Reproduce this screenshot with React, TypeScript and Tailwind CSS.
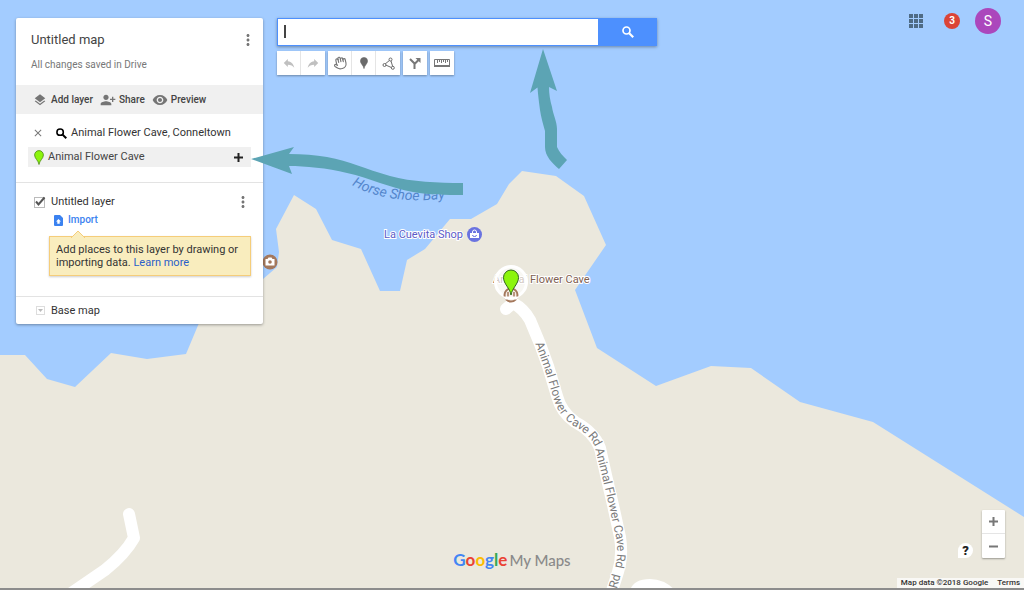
import React, { useState } from "react";
import { Hand } from "lucide-react";
import {
  MdClose,
  MdLayers,
  MdMoreVert,
  MdPersonAddAlt1,
  MdRemoveRedEye,
  MdReply,
} from "react-icons/md";

const ROAD =
  "M506 309 L513 303 Q524 309 530 320 L540 344 L548 366 L557 396 Q561 412 575 422 Q594 432 600 448 L606 475 L613 505 L620 537 Q623 556 618 572 L611 594";

function MapCanvas() {
  return (
    <svg
      className="absolute inset-0 h-full w-full"
      viewBox="0 0 1024 590"
      preserveAspectRatio="xMidYMid slice"
      fontFamily="Roboto, sans-serif"
      role="img"
      aria-label="Map"
    >
      <rect width="1024" height="590" fill="#a3ccff" />
      <path
        fill="#ebe8dd"
        d="M0 355 L25 355 L47 379 L75 387 L111 353 L147 359 L186 354 L199 323 L263 279 L277 267 L279 252 L276 229 L294 195 L316 209 L332 240 L361 249 L380 291 L400 291 L407 260 L425 249 L450 219 L471 219 L497 204 L509 184 L522 171 L556 176 L584 196 L606 245 L575 290 L597 348 L656 386 L711 366 L751 368 L800 402 L873 422 L1024 517 V590 H0 Z"
      />
      <g fill="none" stroke="#fff" strokeWidth="12" strokeLinecap="round" strokeLinejoin="round">
        <path d="M129 514 L134 538 Q125 554 105 570 L70 594" />
        <path d={ROAD} />
      </g>
      <path fill="#fff" d="M630 590 Q634 579 650 579 Q664 579 675 590 Z" />

      <defs>
        <path id="road-a" d="M539 342 L548 366 L557 396 Q561 412 575 422 Q594 432 600 448 L604 460" />
        <path id="road-b" d="M599 448 L606 475 L613 505 L620 537 Q623 556 618 572 L611 594" />
        <path id="road-c" d="M613 588 L618 570" />
        <path id="bay" d="M352 185 Q388 206 450 198" />
      </defs>
      <g fill="#7b7b7b" stroke="#fff" strokeWidth="2" paintOrder="stroke" fontSize="12">
        <text dy="4">
          <textPath href="#road-a">Animal Flower Cave Rd</textPath>
        </text>
        <text dy="4">
          <textPath href="#road-b">Animal Flower Cave Rd</textPath>
        </text>
        <text dy="4">
          <textPath href="#road-c">Rd</textPath>
        </text>
      </g>
      <text fill="#5486cc" fontSize="14" fontStyle="italic">
        <textPath href="#bay">Horse Shoe Bay</textPath>
      </text>

      <text x="384" y="238" fontSize="11" fill="#5b5bc8" stroke="#fff" strokeWidth="2" paintOrder="stroke">
        La Cuevita Shop
      </text>
      <circle cx="474.500" cy="234.500" r="7.500" fill="#6a73e0" />
      <path fill="#fff" d="M470 233 h9 v5 h-9 Z" />
      <path fill="none" stroke="#fff" d="M472.500 233 v-1 a2 2 0 0 1 4 0 v1" />
      <path fill="none" stroke="#6a73e0" d="M472.500 235 a2 1.500 0 0 0 4 0" />

      <circle cx="270" cy="262" r="7.500" fill="#a4785c" />
      <path fill="#fff" d="M265.500 259 h2 l1 -1.500 h3 l1 1.500 h2 v6.500 h-9 Z" />
      <circle cx="270" cy="262" r="1.800" fill="#a4785c" />

      <text x="493" y="283" fontSize="11" fill="#806050" stroke="#fff" strokeWidth="2" paintOrder="stroke">
        Animal Flower Cave
      </text>
      <circle cx="511" cy="282" r="15.500" fill="#fff" fillOpacity="0.650" stroke="#fff" strokeWidth="3" />
      <circle cx="511" cy="295" r="6.500" fill="#f4ece6" stroke="#a4785c" strokeWidth="2" />
      <path fill="none" stroke="#a4785c" strokeWidth="1.500" d="M508 292 V297 M514 292 V297" />
      <path fill="#fff" d="M503 296.500 h16 l-2 3 h-12 Z" />
      <path
        fill="#8cf50c"
        stroke="#33691e"
        d="M511 295 C510 288 503.500 284 503.500 277.500 a7.500 7.500 0 0 1 15 0 C518.500 284 512 288 511 295 Z"
      />
    </svg>
  );
}

function Arrows() {
  return (
    <svg
      className="pointer-events-none absolute inset-0 h-full w-full"
      viewBox="0 0 1024 590"
      preserveAspectRatio="xMidYMid slice"
      aria-hidden="true"
      fill="#5ca4b4"
    >
      <path d="M251 159 L294 147 L289 154 C303 154 315 155 327 157 C350 161 365 169 390 176 C412 182 438 183 463 183 V195 C445 195 430 195 413 192 C390 188 370 178 347 173 C327 168 305 166 289 166 L292 174 Z" />
      <path d="M543 49 L557 91 L549 87 C549 94 550 100 552 107 C553 114 557 122 557 129 V147 C559 152 563 156 567 160 L559 169 C552 163 545 156 545 147 V131 C543 124 541 117 540 110 C539 102 538 95 537.500 87.500 L530 93 Z" />
    </svg>
  );
}

function Pin({ className, fill, stroke }: { className: string; fill: string; stroke: string }) {
  return (
    <svg className={className} viewBox="0 0 10 15" aria-hidden="true">
      <path
        d="M5 14.500 C4.500 10.500 0.600 8.500 0.600 5 a4.400 4.400 0 0 1 8.800 0 C9.400 8.500 5.500 10.500 5 14.500 Z"
        fill={fill}
        stroke={stroke}
        strokeWidth="0.800"
      />
    </svg>
  );
}

function SearchIcon({ className }: { className: string }) {
  return (
    <svg className={className} viewBox="0 0 12 12" fill="none" stroke="currentColor" aria-hidden="true">
      <circle cx="4.500" cy="4.500" r="3.500" strokeWidth="1.700" />
      <path d="M7.200 7.200 L11.200 11.200" strokeWidth="2.200" />
    </svg>
  );
}

function PlusIcon() {
  return (
    <svg className="h-[9px] w-[9px]" viewBox="0 0 9 9" fill="currentColor" aria-hidden="true">
      <path d="M3.500 0 H5.500 V3.500 H9 V5.500 H5.500 V9 H3.500 V5.500 H0 V3.500 H3.500 Z" />
    </svg>
  );
}

function MinusIcon() {
  return (
    <svg className="h-[9px] w-[9px]" viewBox="0 0 9 9" fill="currentColor" aria-hidden="true">
      <path d="M0 3.500 H9 V5.500 H0 Z" />
    </svg>
  );
}

function Panel() {
  const [visible, setVisible] = useState(true);
  return (
    <aside className="w-[247px] shrink-0 rounded-[2px] bg-white text-[11px] leading-4 text-[#333] shadow-[0_1px_3px_rgba(0,0,0,0.35)]">
      <header className="flex justify-between px-[15px] pt-3 pb-3">
        <div>
          <h1 className="text-[13px] leading-5 text-[#444]">Untitled map</h1>
          <p className="mt-[7px] text-[10px] leading-4 text-[#777]">All changes saved in Drive</p>
        </div>
        <button aria-label="Map options" className="-mr-[9px] h-5 text-[#757575]">
          <MdMoreVert size={18} />
        </button>
      </header>

      <div className="flex h-[29px] items-center gap-[7px] bg-[#f0f0f0] pl-[17px] text-[10px] font-medium text-[#444]">
        <button className="flex items-center gap-1">
          <MdLayers size={14} className="text-[#757575]" />
          Add layer
        </button>
        <button className="flex items-center gap-[3px]">
          <MdPersonAddAlt1 size={16} className="text-[#757575]" />
          Share
        </button>
        <button className="flex items-center gap-[3px]">
          <MdRemoveRedEye size={16} className="text-[#757575]" />
          Preview
        </button>
      </div>

      <section className="h-[69px] border-b border-[#e3e3e3] px-3 pt-[11px]">
        <div className="flex h-4 items-center pl-1">
          <button aria-label="Clear search" className="text-[#777]">
            <MdClose size={12} />
          </button>
          <SearchIcon className="mr-1 ml-3 h-[11px] w-[11px] text-black" />
          <h2 className="whitespace-nowrap">Animal Flower Cave, Conneltown</h2>
        </div>
        <div className="mt-[6px] flex h-5 items-center bg-[#f0f0f0] pr-2 pl-[6px]">
          <Pin className="mr-1 h-[15px] w-[10px]" fill="#8cf50c" stroke="#4b8b12" />
          <span className="grow text-[#444]">Animal Flower Cave</span>
          <button aria-label="Add to map" className="text-[#222]">
            <PlusIcon />
          </button>
        </div>
      </section>

      <section className="h-[114px] border-b border-[#e3e3e3] pt-[9px] pr-3 pl-[18px]">
        <div className="flex h-5 items-center">
          <label className="flex grow items-center gap-[6px]">
            <span className="relative flex h-[11px] w-[11px]">
              <input
                type="checkbox"
                checked={visible}
                onChange={() => setVisible(!visible)}
                className="h-[11px] w-[11px] appearance-none border border-[#bbb] bg-white"
              />
              {visible && (
                <svg className="pointer-events-none absolute inset-0 overflow-visible" viewBox="0 0 11 11" aria-hidden="true">
                  <path d="M2 4.500 L4.500 7.500 L10.500 0.500" fill="none" stroke="#555" strokeWidth="2" />
                </svg>
              )}
            </span>
            Untitled layer
          </label>
          <button aria-label="Layer options" className="-mr-[1px] text-[#757575]">
            <MdMoreVert size={18} />
          </button>
        </div>
        <button className="ml-5 flex h-4 items-center gap-[5px] text-[10px] font-medium text-[#3b82f0]">
          <svg className="h-[11px] w-[9px]" viewBox="0 0 9 11" aria-hidden="true">
            <path d="M0 1 Q0 0 1 0 H6 L9 3 V10 Q9 11 8 11 H1 Q0 11 0 10 Z" fill="#3b82f0" />
            <path d="M4.500 4 L7 6.500 H5.700 V8.700 H3.300 V6.500 H2 Z" fill="#fff" />
          </svg>
          Import
        </button>
        <div className="relative mt-2 ml-[15px] border border-[#f5cd7a] bg-[#f9edbe] p-[6px] text-[11px] leading-[13px] shadow-[0_1px_2px_rgba(0,0,0,0.2)]">
          <svg className="absolute -top-[7px] left-5 h-2 w-4" viewBox="0 0 16 8" aria-hidden="true">
            <path d="M1 8 L8 1 L15 8" fill="#f9edbe" stroke="#f5cd7a" />
          </svg>
          Add places to this layer by drawing or importing data.{" "}
          <a href="#learn" className="text-[#2a5fc9]">
            Learn more
          </a>
        </div>
      </section>

      <button className="flex h-[27px] w-full items-center gap-[6px] pl-5 text-left">
        <span className="flex h-[9px] w-[9px] items-center justify-center border border-[#ddd]">
          <svg className="h-[3px] w-[5px]" viewBox="0 0 5 3" aria-hidden="true">
            <path d="M0 0 H5 L2.500 3 Z" fill="#bbb" />
          </svg>
        </span>
        Base map
      </button>
    </aside>
  );
}

function Tool({ label, children }: { label: string; children: React.ReactNode }) {
  return (
    <button aria-label={label} className="flex h-6 w-6 items-center justify-center">
      {children}
    </button>
  );
}

function ToolGroup({ children }: { children: React.ReactNode }) {
  return (
    <div className="flex divide-x divide-[#e5e5e5] bg-white text-[#777] shadow-[0_1px_2px_rgba(0,0,0,0.35)]">
      {children}
    </div>
  );
}

function SearchArea() {
  const [query, setQuery] = useState("");
  return (
    <div className="w-[380px]">
      <form className="flex h-7 shadow-[0_1px_3px_rgba(0,0,0,0.35)]" onSubmit={(e) => e.preventDefault()}>
        <div className="relative grow">
          <input
            aria-label="Search"
            value={query}
            onChange={(e) => setQuery(e.target.value)}
            className="h-full w-full border border-[#4d90fe] bg-white px-2 text-[13px] outline-none"
          />
          {query === "" && (
            <span className="pointer-events-none absolute top-[7px] left-[7px] h-[13px] w-[2px] bg-[#444]" />
          )}
        </div>
        <button aria-label="Search maps" className="flex w-[58px] items-center justify-center bg-[#4d90fe] text-white">
          <SearchIcon className="h-3 w-3" />
        </button>
      </form>
      <div className="mt-[5px] flex gap-[3px]">
        <ToolGroup>
          <Tool label="Undo">
            <MdReply size={14} className="text-[#c0c0c0]" />
          </Tool>
          <Tool label="Redo">
            <MdReply size={14} className="-scale-x-100 text-[#c0c0c0]" />
          </Tool>
        </ToolGroup>
        <ToolGroup>
          <Tool label="Select items">
            <Hand size={14} strokeWidth={2} className="-rotate-12" />
          </Tool>
          <Tool label="Add marker">
            <Pin className="h-3 w-2" fill="#6b6b6b" stroke="#6b6b6b" />
          </Tool>
          <Tool label="Draw a line">
            <svg className="h-[13px] w-[13px]" viewBox="0 0 13 13" fill="none" stroke="#6b6b6b" aria-hidden="true">
              <path d="M8 3 L2.500 7.500 L10.500 11 M8.500 2.500 L11 10.500" />
              <circle cx="8.500" cy="2.500" r="1.500" fill="#fff" />
              <circle cx="2.500" cy="8" r="1.500" fill="#fff" />
              <circle cx="10.800" cy="10.800" r="1.500" fill="#fff" />
            </svg>
          </Tool>
        </ToolGroup>
        <ToolGroup>
          <Tool label="Add directions">
            <svg className="h-3 w-3" viewBox="0 0 12 12" aria-hidden="true">
              <path d="M1 2 L5.500 6.500 V12 M5.500 7 L9.500 3" fill="none" stroke="#777" strokeWidth="2" />
              <path d="M6.500 1 H11.500 V6 Z" fill="#777" />
            </svg>
          </Tool>
        </ToolGroup>
        <ToolGroup>
          <Tool label="Measure distances">
            <svg className="h-2 w-4" viewBox="0 0 16 8" fill="none" stroke="#777" aria-hidden="true">
              <path d="M0.500 0.500 H15.500 V7.500 H0.500 Z M3.500 1 V4 M5.500 1 V3 M7.500 1 V4 M9.500 1 V3 M11.500 1 V4 M13.500 1 V3" />
              <path d="M0 7 H16" strokeWidth="2" />
            </svg>
          </Tool>
        </ToolGroup>
      </div>
    </div>
  );
}

function Account() {
  return (
    <nav className="flex h-[26px] items-center font-medium text-white">
      <button aria-label="Apps" className="mr-[21px] grid grid-cols-3 gap-px">
        {Array.from({ length: 9 }, (_, i) => (
          <span key={i} className="h-1 w-1 bg-[#4f6b85]" />
        ))}
      </button>
      <button aria-label="Notifications" className="mr-[15px] h-4 w-4 rounded-full bg-[#db4437] text-center text-[10px] leading-4 font-bold">
        3
      </button>
      <button aria-label="Account" className="h-[26px] w-[26px] rounded-full bg-[#ab47bc] text-center text-[14px] leading-[26px] font-normal">
        S
      </button>
    </nav>
  );
}

function BottomBar() {
  return (
    <footer className="relative mt-auto grid grid-cols-[1fr_auto_1fr] items-end border-b-2 border-[#8c8c8c]">
      <div />
      <div className="flex items-baseline gap-[2px] pb-[18px] font-[Lato,sans-serif] leading-5 text-[#8a8a8a]">
        <span className="text-[17px] font-bold">
          <span className="text-[#4285f4]">G</span>
          <span className="text-[#ea4335]">o</span>
          <span className="text-[#fbbc05]">o</span>
          <span className="text-[#4285f4]">g</span>
          <span className="text-[#34a853]">l</span>
          <span className="text-[#ea4335]">e</span>
        </span>
        <span className="text-[15px] font-medium">My Maps</span>
      </div>
      <div className="flex flex-col items-end">
        <div className="mr-[19px] flex items-end gap-[9px]">
          <button
            aria-label="Help"
            className="h-[15px] w-[15px] rounded-full rounded-bl-none bg-white text-center text-[13px] leading-[15px] font-black text-[#222]"
          >
            ?
          </button>
          <div className="flex flex-col divide-y divide-[#e5e5e5] rounded-[1px] bg-white text-[#777] shadow-[0_1px_2px_rgba(0,0,0,0.35)]">
            <button aria-label="Zoom in" className="flex h-6 w-[23px] items-center justify-center">
              <PlusIcon />
            </button>
            <button aria-label="Zoom out" className="flex h-6 w-[23px] items-center justify-center">
              <MinusIcon />
            </button>
          </div>
        </div>
        <div className="mt-5 flex gap-[9px] bg-white/70 px-1 text-[8px] leading-[10px] font-medium text-[#333]">
          <span>Map data ©2018 Google</span>
          <a href="#terms">Terms</a>
        </div>
      </div>
    </footer>
  );
}

export default function App() {
  return (
    <main className="relative flex min-h-screen flex-col overflow-hidden bg-[#a3ccff] font-[Roboto,sans-serif]">
      <MapCanvas />
      <div className="relative flex items-start gap-[14px] pr-[23px] pl-4">
        <div className="pt-[18px]">
          <Panel />
        </div>
        <div className="pt-[18px]">
          <SearchArea />
        </div>
        <div className="ml-auto pt-2">
          <Account />
        </div>
      </div>
      <BottomBar />
      <Arrows />
    </main>
  );
}
